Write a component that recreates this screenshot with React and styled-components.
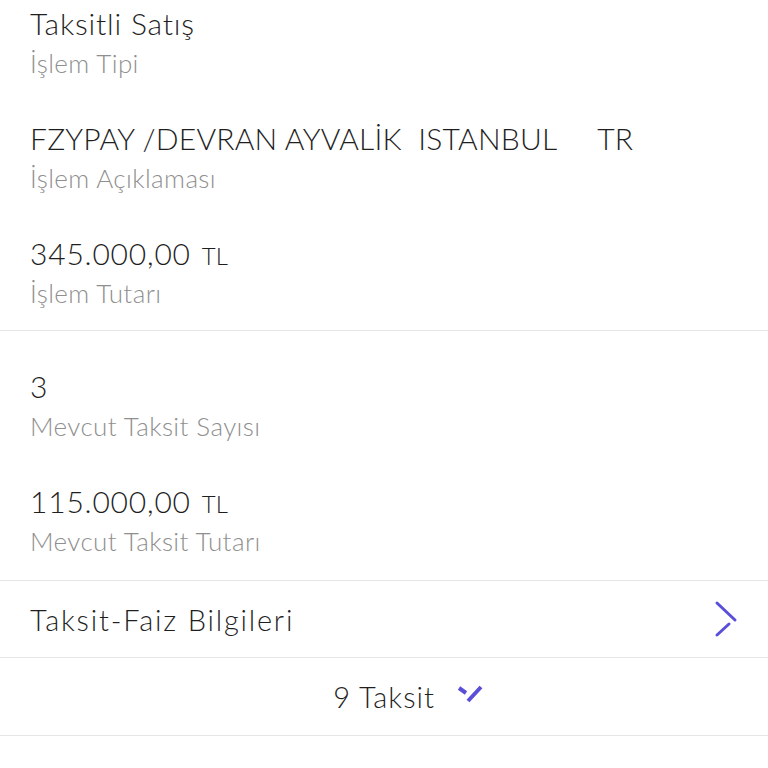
import React from "react";
import styled, { createGlobalStyle } from "styled-components";

const Global = createGlobalStyle`
  html, body { margin: 0; padding: 0; background: #ffffff; }
  body { font-family: Lato, "Noto Sans", "Liberation Sans", sans-serif; -webkit-font-smoothing: antialiased; }
`;

const Page = styled.div`
  width: 768px;
  height: 768px;
  background: #ffffff;
  overflow: hidden;
  color: #1f1f1f;
`;

const Section = styled.section`
  display: flex;
  flex-direction: column;
  gap: 39px;
  padding: ${(p) => p.$top}px 30px ${(p) => p.$bottom}px;
  border-bottom: 1px solid #e6e6e6;
`;

const Item = styled.div`
  display: flex;
  flex-direction: column;
`;

const Value = styled.div`
  font-size: 30px;
  font-weight: 300;
  line-height: 36px;
  white-space: pre;
  letter-spacing: ${(p) => (p.$caps ? "0.2px" : "0.8px")};
  color: #1f1f1f;
`;

const Unit = styled.span`
  font-size: 24px;
  line-height: 1;
  letter-spacing: 0;
  margin-left: 11px;
`;

const Label = styled.div`
  margin-top: 4px;
  font-size: 26px;
  font-weight: 300;
  line-height: 36px;
  letter-spacing: 0.4px;
  color: #8f8f8f;
`;

const LinkRow = styled.div`
  height: 77px;
  box-sizing: border-box;
  display: flex;
  align-items: center;
  justify-content: space-between;
  padding: 0 30px;
  border-bottom: 1px solid #e6e6e6;
  font-size: 29px;
  font-weight: 300;
  letter-spacing: 1.8px;
`;

const ChoiceRow = styled.div`
  height: 78px;
  box-sizing: border-box;
  display: grid;
  grid-template-columns: 1fr auto 1fr;
  align-items: center;
  border-bottom: 1px solid #e6e6e6;
  font-size: 29px;
  font-weight: 300;
  letter-spacing: 1px;
`;

const ChoiceText = styled.span`
  grid-column: 2;
`;

const ChoiceIcon = styled.span`
  grid-column: 3;
  justify-self: start;
  display: flex;
  margin-left: 22px;
  margin-top: -5px;
`;

const Chevron = () => (
  <svg width="24" height="38" viewBox="0 0 24 38" fill="none">
    <path d="M3 3 L21 20 M15 24 L3 35" stroke="#5a4fd8" strokeWidth="3" strokeLinecap="round" />
  </svg>
);

const Check = () => (
  <svg width="26" height="18" viewBox="0 0 26 18" fill="none">
    <path d="M2 3 L9 8 M11 16 L24 2" stroke="#5a4fd8" strokeWidth="4" strokeLinecap="butt" />
  </svg>
);

const first = [
  { value: "Taksitli Satış", label: "İşlem Tipi" },
  { value: "FZYPAY /DEVRAN AYVALİK  ISTANBUL     TR", label: "İşlem Açıklaması", caps: true },
  { value: "345.000,00", unit: "TL", label: "İşlem Tutarı" },
];

const second = [
  { value: "3", label: "Mevcut Taksit Sayısı" },
  { value: "115.000,00", unit: "TL", label: "Mevcut Taksit Tutarı" },
];

const renderItems = (items) =>
  items.map((it) => (
    <Item key={it.label}>
      <Value $caps={it.caps}>
        {it.value}
        {it.unit && <Unit>{it.unit}</Unit>}
      </Value>
      <Label>{it.label}</Label>
    </Item>
  ));

export default function App() {
  return (
    <>
      <Global />
      <Page>
        <Section $top={5} $bottom={19}>{renderItems(first)}</Section>
        <Section $top={37} $bottom={21}>{renderItems(second)}</Section>
        <LinkRow>
          <span>Taksit-Faiz Bilgileri</span>
          <Chevron />
        </LinkRow>
        <ChoiceRow>
          <ChoiceText>9 Taksit</ChoiceText>
          <ChoiceIcon>
            <Check />
          </ChoiceIcon>
        </ChoiceRow>
      </Page>
    </>
  );
}
